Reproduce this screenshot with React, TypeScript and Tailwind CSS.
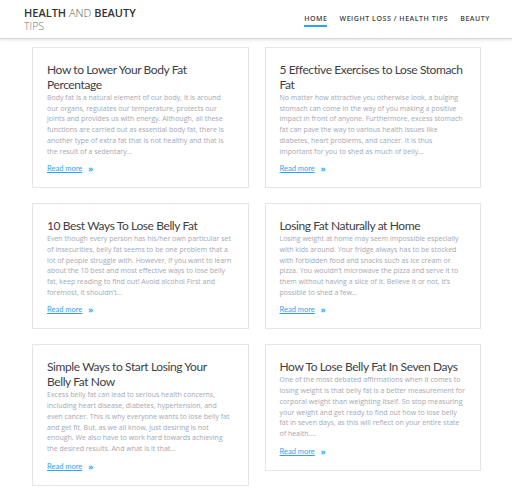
import React from 'react';

// ===========================================
// DATA
// ===========================================

type Post = {
  title: string;
  excerpt: string;
};

const POSTS: Post[] = [
  {
    title: 'How to Lower Your Body Fat Percentage',
    excerpt:
      'Body fat is a natural element of our body, it is around our organs, regulates our temperature, protects our joints and provides us with energy. Although, all these functions are carried out as essential body fat, there is another type of extra fat that is not healthy and that is the result of a sedentary…',
  },
  {
    title: '5 Effective Exercises to Lose Stomach Fat',
    excerpt:
      'No matter how attractive you otherwise look, a bulging stomach can come in the way of you making a positive impact in front of anyone. Furthermore, excess stomach fat can pave the way to various health issues like diabetes, heart problems, and cancer. It is thus important for you to shed as much of belly…',
  },
  {
    title: '10 Best Ways To Lose Belly Fat',
    excerpt:
      'Even though every person has his/her own particular set of insecurities, belly fat seems to be one problem that a lot of people struggle with. However, if you want to learn about the 10 best and most effective ways to lose belly fat, keep reading to find out! Avoid alcohol First and foremost, it shouldn’t…',
  },
  {
    title: 'Losing Fat Naturally at Home',
    excerpt:
      'Losing weight at home may seem impossible especially with kids around. Your fridge always has to be stocked with forbidden food and snacks such as ice cream or pizza. You wouldn’t microwave the pizza and serve it to them without having a slice of it. Believe it or not, it’s possible to shed a few…',
  },
  {
    // nbsp keeps "Belly Fat" together so the line breaks like the original
    title: 'Simple Ways to Start Losing Your Belly\u00a0Fat Now',
    excerpt:
      'Excess belly fat can lead to serious health concerns, including heart disease, diabetes, hypertension, and even cancer. This is why everyone wants to lose belly fat and get fit. But, as we all know, just desiring is not enough.  We also have to work hard towards achieving the desired results. And what is it that…',
  },
  {
    title: 'How To Lose Belly Fat In Seven Days',
    excerpt:
      'One of the most debated affirmations when it comes to losing weight is that belly fat is a better measurement for corporal weight than weighting itself. So stop measuring your weight and get ready to find out how to lose belly fat in seven days, as this will reflect on your entire state of health.…',
  },
];

const NAV = ['Home', 'Weight Loss / Health Tips', 'Beauty'];

// ===========================================
// COMPONENT
// ===========================================

export default function App() {
  return (
    <div className="min-h-screen bg-white font-['Open_Sans',sans-serif]">
      {/* ==================== HEADER ==================== */}
      <header className="h-[39px] bg-white border-b border-[#d9d9d9] shadow-[0_1px_3px_rgba(0,0,0,0.12)] flex items-start justify-between pl-[24px] pr-[22px]">
        <div className="pt-[7px] flex flex-col gap-[2px]">
          <div className="text-[11px] leading-[12px] text-[#333]">
            <span className="font-semibold">HEALTH</span>{' '}
            <span className="font-light text-[#555]">AND</span>{' '}
            <span className="font-semibold">BEAUTY</span>
          </div>
          <div className="text-[10.5px] leading-[11px] font-light text-[#777]">TIPS</div>
        </div>

        <nav className="flex items-start gap-[12px] pt-[14px]">
          {NAV.map((item, i) => (
            <a
              key={item}
              className={`text-[7px] font-semibold uppercase tracking-[0.55px] text-[#444] leading-[10px] pb-[1px] ${
                i === 0 ? 'border-b-2 border-[#2ea3f2]' : ''
              }`}
            >
              {item}
            </a>
          ))}
        </nav>
      </header>

      {/* ==================== POSTS GRID ==================== */}
      <main className="grid grid-cols-2 items-start gap-x-[16px] gap-y-[15px] pl-[32px] pr-[31px] pt-[8px]">
        {POSTS.map((post) => (
          <article
            key={post.title}
            className="border border-[#e6e6e6] bg-white pt-[14px] pb-[12px] px-[14px]"
          >
            <h2 className="font-['Lato',sans-serif] text-[12px] tracking-[-0.4px] leading-[15px] text-[#404046] font-normal">
              {post.title}
            </h2>
            <p className="mt-[1px] text-[7px] leading-[10.7px] text-[#a4a8b3]">{post.excerpt}</p>
            <div className="mt-[6px] flex items-center gap-[6px] leading-[12px]">
              <a className="text-[7.5px] text-[#2ea3f2] underline font-['Lato',sans-serif]">Read more</a>
              <span className="text-[8px] font-bold text-[#2ea3f2]">»</span>
            </div>
          </article>
        ))}
      </main>
    </div>
  );
}
